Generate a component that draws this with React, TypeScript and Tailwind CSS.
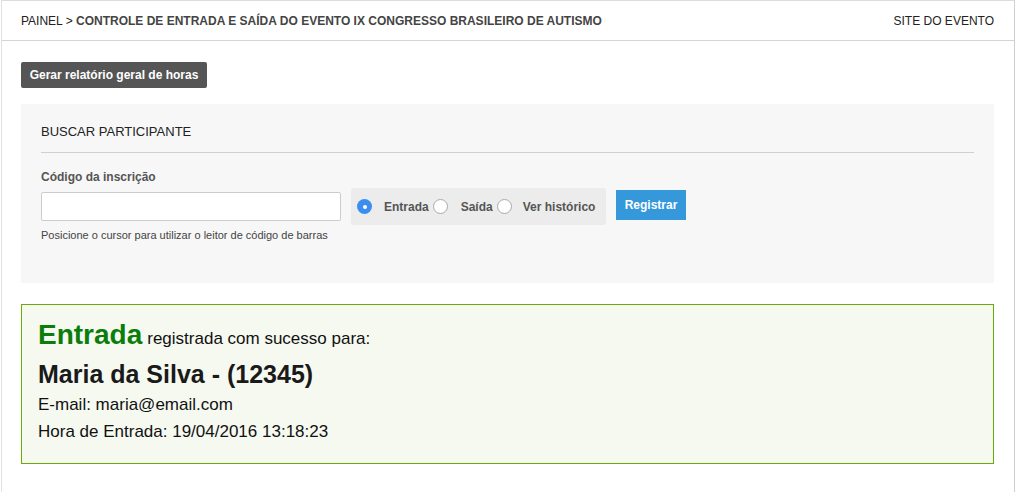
import { useState } from "react";

export default function App() {
  const [codigo, setCodigo] = useState("");
  const [tipo, setTipo] = useState("entrada");

  return (
    <div className="w-[1015px] h-[492px] bg-white font-['Liberation_Sans',Arial,sans-serif] text-[#333]">
      <div className="ml-px w-[1014px] h-full border-t border-l border-r border-t-[#dcdcdc] border-l-[#e2e2e2] border-r-[#cfcfcf]">
        <header className="h-[40px] flex items-center justify-between pl-[19px] pr-[20px] border-b border-[#d4d4d4] text-[12px]">
          <div className="text-[#222]">
            PAINEL &gt; <span className="font-bold text-[#444]">CONTROLE DE ENTRADA E SAÍDA DO EVENTO IX CONGRESSO BRASILEIRO DE AUTISMO</span>
          </div>
          <a className="text-[#222]">SITE DO EVENTO</a>
        </header>

        <div className="px-[19px] pt-[21px]">
          <button className="h-[26px] w-[186px] bg-[#555] text-white text-[12px] font-bold rounded-[2px]">
            Gerar relatório geral de horas
          </button>

          <div className="mt-[16px] w-[973px] h-[179px] bg-[#f7f7f7] px-[20px] pt-[19px]">
            <h2 className="text-[13px] text-[#222] leading-[17px]">BUSCAR PARTICIPANTE</h2>
            <div className="mt-[12px] border-t border-[#d0d0d0]" />

            <label className="block mt-[17px] text-[12px] font-bold text-[#555] leading-[15px]">Código da inscrição</label>
            <div className="mt-[3px] flex items-center">
              <input
                value={codigo}
                onChange={(e) => setCodigo(e.target.value)}
                className="w-[300px] h-[29px] bg-white border border-[#ccc] rounded-[2px] px-2 text-[13px] outline-none"
              />
              <div className="ml-[10px] h-[37px] w-[255px] bg-[#ececec] rounded-[3px] flex items-center pl-[6px] text-[12px] font-bold text-[#555]">
                <Radio checked={tipo === "entrada"} onClick={() => setTipo("entrada")} />
                <span className="ml-[12px]">Entrada</span>
                <span className="ml-[4px]">
                  <Radio checked={tipo === "saida"} onClick={() => setTipo("saida")} />
                </span>
                <span className="ml-[13px]">Saída</span>
                <span className="ml-[4px]">
                  <Radio checked={tipo === "hist"} onClick={() => setTipo("hist")} />
                </span>
                <span className="ml-[11px]">Ver histórico</span>
              </div>
              <button className="ml-[10px] self-start mt-[2px] h-[30px] w-[70px] bg-[#3498db] text-white text-[12px] font-bold">Registrar</button>
            </div>
            <p className="mt-[2px] text-[11px] text-[#444]">Posicione o cursor para utilizar o leitor de código de barras</p>
          </div>

          <div className="mt-[21px] w-[973px] h-[160px] bg-[#f6f9f0] border border-[#6aaa0a] px-[16px] pt-[14px] text-[#111]">
            <div className="flex items-baseline leading-[32px]">
              <span className="text-[28px] font-bold text-[#0a7d0a]">Entrada</span>
              <span className="ml-[5px] text-[17px]">registrada com sucesso para:</span>
            </div>
            <div className="mt-[4px] text-[25px] font-bold text-[#1a1a1a] leading-[30px]">Maria da Silva - (12345)</div>
            <div className="mt-[5px] text-[17px] leading-[22px]">E-mail: maria@email.com</div>
            <div className="mt-[5px] text-[17px] leading-[22px]">Hora de Entrada: 19/04/2016 13:18:23</div>
          </div>
        </div>
      </div>
    </div>
  );
}

function Radio({ checked, onClick }: { checked: boolean; onClick: () => void }) {
  return (
    <span
      onClick={onClick}
      className={
        checked
          ? "w-[15px] h-[15px] rounded-full bg-[#3b8ef0] flex items-center justify-center shrink-0"
          : "block w-[15px] h-[15px] rounded-full bg-white border border-[#aaa] shrink-0"
      }
    >
      {checked && <span className="w-[4px] h-[4px] rounded-full bg-white" />}
    </span>
  );
}
